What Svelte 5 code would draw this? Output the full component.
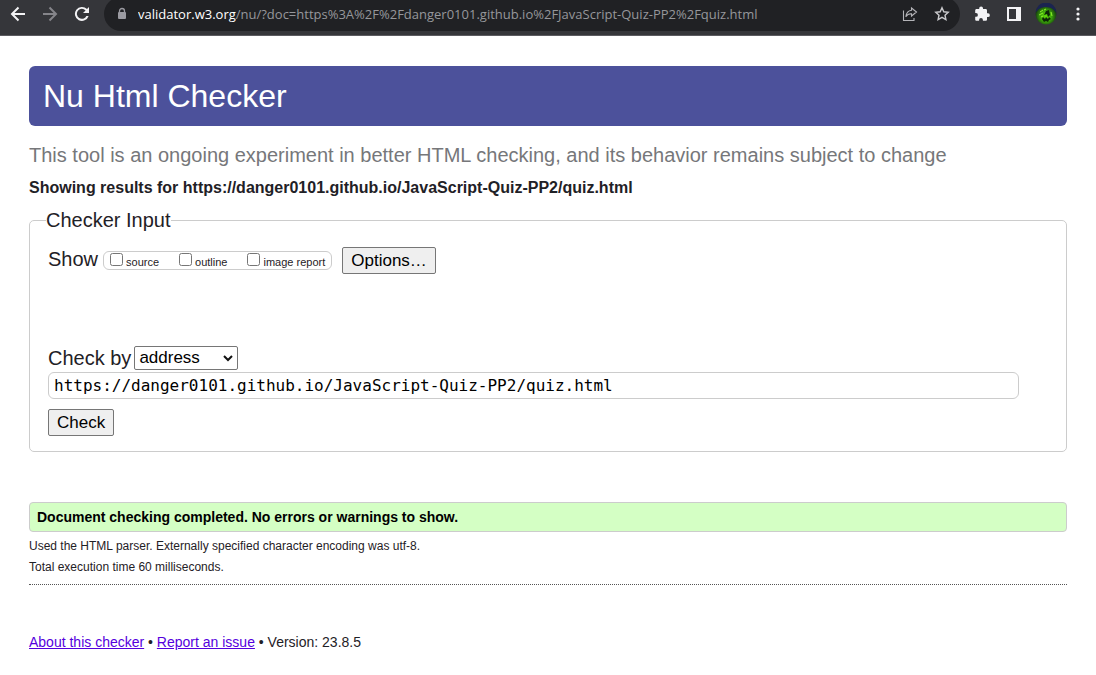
<script>
  const address = 'https://danger0101.github.io/JavaScript-Quiz-PP2/quiz.html';
  const reports = [
    { id: 'source', label: 'source' },
    { id: 'outline', label: 'outline' },
    { id: 'image', label: 'image report' }
  ];
</script>

<header class="toolbar">
  <button class="icon" aria-label="Back">
    <svg width="16" height="16" viewBox="0 0 16 16" fill="none" stroke="#f3f3f5" stroke-width="2"><path d="M15 8H2M8.500 1.500 2 8l6.500 6.500" /></svg>
  </button>
  <button class="icon" aria-label="Forward">
    <svg width="16" height="16" viewBox="0 0 16 16" fill="none" stroke="#85858a" stroke-width="2"><path d="M1 8h13M7.500 1.500 14 8l-6.500 6.500" /></svg>
  </button>
  <button class="icon" aria-label="Reload">
    <svg width="16" height="16" viewBox="0 0 16 16"><path d="M13 3.100A7 7 0 1 0 14.600 10h-2.200A5 5 0 1 1 11.600 4.500L9 7h6V1z" fill="#f3f3f5" /></svg>
  </button>
  <div class="omnibox">
    <svg class="lock" width="10" height="14" viewBox="0 0 10 14"><rect x="1" y="5" width="8" height="7" rx="1" fill="#9a9aa1" /><path d="M2.500 5.500V4a2.500 2.500 0 0 1 5 0v1.500" fill="none" stroke="#9a9aa1" stroke-width="1.300" /></svg>
    <span class="url"><b>validator.w3.org</b>/nu/?doc=https%3A%2F%2Fdanger0101.github.io%2FJavaScript-Quiz-PP2%2Fquiz.html</span>
    <button class="icon" aria-label="Share">
      <svg width="16" height="16" viewBox="0 0 16 16" fill="none" stroke="#b4b4b8" stroke-width="1.100"><path d="M1.500 4.500v10h10.500v-2.500M9.500 2l5 4-5 4V7.800C6.500 7.600 5 8.800 3.800 10.800 4.300 7.200 6.200 4.700 9.500 4.300z" /></svg>
    </button>
    <button class="icon" aria-label="Bookmark this page">
      <svg width="16" height="16" viewBox="0 0 16 16" fill="none" stroke="#c9c9cc" stroke-width="1.400"><path d="m8 1.800 1.800 4 4.400.5-3.200 2.900.9 4.400L8 11.400l-3.900 2.200.9-4.400-3.200-2.900 4.400-.5z" /></svg>
    </button>
  </div>
  <div class="actions">
    <button class="icon" aria-label="Extensions">
      <svg width="16" height="16" viewBox="0 0 16 16"><path d="M14 7.300h-1V4.500c0-.8-.6-1.400-1.300-1.400H9V2.300a1.900 1.900 0 0 0-3.800 0v.8H2.600c-.8 0-1.400.6-1.400 1.400V7h.8a1.900 1.900 0 0 1 0 3.800h-.8v2.600c0 .8.600 1.400 1.400 1.400h2.500V14a1.900 1.900 0 0 1 3.800 0v.8h2.800c.7 0 1.300-.6 1.300-1.400V11h1a1.850 1.850 0 0 0 0-3.700z" fill="#f3f3f5" /></svg>
    </button>
    <button class="icon" aria-label="Side panel">
      <svg width="16" height="16" viewBox="0 0 16 16"><path fill-rule="evenodd" d="M1 1h14v14H1zM3 3v10h7V3z" fill="#f3f3f5" /></svg>
    </button>
    <button class="icon" aria-label="Profile">
      <svg width="22" height="22" viewBox="0 0 22 22">
        <defs>
          <radialGradient id="face" cx="0.5" cy="0.6" r="0.5"><stop offset="0" stop-color="#62dc08" /><stop offset=".55" stop-color="#3aa00a" /><stop offset="1" stop-color="#173e12" /></radialGradient>
        </defs>
        <circle cx="11" cy="11" r="10.500" fill="url(#face)" />
        <path d="M.5 10A10.500 10.500 0 0 1 21.500 10C20 7 16 4 11 4S3 6 .5 10z" fill="#1b2450" />
        <path d="M11 8l3-1 1 5-2 2-1-3-3 1zM7 16l1-2 2 2 1-2 2 2 1-2 2 2-2 1-1 2-2-1-2 1z" fill="#0c2608" />
        <path d="M5 9l3-2M9 7l2-1M4 12l4-2M16 9l1 4M6 14l2-1" stroke="#8df32a" />
      </svg>
    </button>
    <button class="icon" aria-label="Menu">
      <svg width="16" height="16" viewBox="0 0 16 16" fill="#f3f3f5"><circle cx="8" cy="3" r="1.600" /><circle cx="8" cy="8" r="1.600" /><circle cx="8" cy="13" r="1.600" /></svg>
    </button>
  </div>
</header>

<main>
  <h1>Nu Html Checker</h1>
  <p class="tagline">This tool is an ongoing experiment in better HTML checking, and its behavior remains subject to change</p>
  <h2>Showing results for {address}</h2>

  <form onsubmit={(e) => e.preventDefault()}>
    <fieldset class="checker">
      <legend>Checker Input</legend>
      <div class="show">
        <span class="caption">Show</span>
        <div class="reports" role="group" aria-label="Show">
          {#each reports as r (r.id)}
            <label><input type="checkbox" name={r.id} /><span>{r.label}</span></label>
          {/each}
        </div>
        <button type="button" class="btn">Options…</button>
      </div>
      <div class="by">
        <label for="method">Check by</label>
        <div class="select">
          <select id="method">
            <option>address</option>
            <option>file upload</option>
            <option>text input</option>
          </select>
          <svg width="10" height="8" viewBox="0 0 10 8" fill="none" stroke="#111" stroke-width="2"><path d="m1 2 4 4 4-4" /></svg>
        </div>
      </div>
      <input class="doc" type="text" aria-label="Address" value={address} />
      <button type="submit" class="btn">Check</button>
    </fieldset>
  </form>

  <p class="success">Document checking completed. No errors or warnings to show.</p>
  <div class="details">
    <p>Used the HTML parser. Externally specified character encoding was utf-8.</p>
    <p>Total execution time 60 milliseconds.</p>
  </div>
  <footer><a href="#about">About this checker</a> • <a href="#issue">Report an issue</a> • Version: 23.8.5</footer>
</main>

<style>
  :global(body) {
    margin: 0;
    background: #fff;
    color: #1f2126;
    font-family: 'Liberation Sans', Arial, sans-serif;
  }
  .toolbar {
    display: flex;
    box-sizing: border-box;
    height: 36px;
    padding-left: 10px;
    overflow: hidden;
    background: #35363a;
    border-bottom: 1px solid #5b5b60;
  }
  .icon {
    display: flex;
    align-items: center;
    justify-content: center;
    flex: none;
    width: 32px;
    height: 28px;
    padding: 0;
    border: 0;
    background: none;
  }
  .toolbar > .icon {
    padding-right: 16px;
    justify-content: flex-start;
  }
  .omnibox {
    display: flex;
    flex: 1;
    align-items: center;
    box-sizing: border-box;
    min-width: 0;
    height: 34px;
    margin: -3px 0 0 -2px;
    padding: 0 2px 0 13px;
    border-radius: 17px;
    background: #202124;
  }
  .lock {
    flex: none;
    margin-right: 11px;
  }
  .url {
    flex: 1;
    min-width: 0;
    overflow: hidden;
    white-space: nowrap;
    color: #96979b;
    font: 13px/20px 'Open Sans', sans-serif;
  }
  .url b {
    color: #fff;
    font-weight: 400;
  }
  .actions {
    display: flex;
    padding: 0 2px 0 6px;
  }
  main {
    padding: 30px 29px;
  }
  h1,
  h2,
  p {
    margin: 0;
  }
  h1 {
    padding: 10px 14px;
    border-radius: 6px;
    background: #4c519b;
    color: #fff;
    font-size: 32px;
    font-weight: 400;
    line-height: 40px;
  }
  .tagline {
    margin-top: 17px;
    color: #76777a;
    font-size: 20px;
    line-height: 24px;
  }
  h2 {
    margin-top: 11px;
    font-size: 16px;
    line-height: 20px;
  }
  .checker {
    margin: 10px 0 0;
    padding: 15px 47px 15px 18px;
    border: 1px solid #ccc;
    border-radius: 5px;
  }
  legend {
    margin-left: -2px;
    padding: 0;
    font-size: 20px;
    line-height: 24px;
  }
  .show,
  .by {
    display: flex;
    align-items: center;
    font-size: 20px;
    line-height: 24px;
  }
  .caption {
    align-self: flex-start;
  }
  .reports {
    display: flex;
    gap: 20px;
    box-sizing: border-box;
    height: 19px;
    margin: 0 10px 0 5px;
    padding: 0 6px;
    border: 1px solid #ccc;
    border-radius: 6px;
    font-size: 11px;
    line-height: 20px;
  }
  .reports label {
    display: flex;
    gap: 3px;
  }
  .reports input {
    width: 13px;
    height: 13px;
    margin: 1px 0 0;
  }
  .btn {
    display: block;
    box-sizing: border-box;
    height: 27px;
    padding: 0 8px;
    border: 1px solid #767676;
    border-radius: 2px;
    background: #efefef;
    color: #000;
    font: 17px/24px 'Liberation Sans', Arial, sans-serif;
  }
  .by {
    gap: 3px;
    margin-top: 72px;
  }
  .select {
    display: grid;
    align-items: center;
  }
  .select > * {
    grid-area: 1 / 1;
  }
  .select svg {
    justify-self: end;
    margin-right: 5px;
    pointer-events: none;
  }
  select {
    appearance: none;
    width: 104px;
    height: 24px;
    padding: 0 4px;
    border: 1px solid #767676;
    border-radius: 2px;
    background: #fff;
    color: #000;
    font: 17px/20px 'Liberation Sans', Arial, sans-serif;
  }
  .doc {
    display: block;
    box-sizing: border-box;
    width: 100%;
    height: 27px;
    margin: 2px 0 10px;
    padding: 0 5px;
    border: 1px solid #ccc;
    border-radius: 6px;
    color: #000;
    font: 16px/24px 'DejaVu Sans Mono', monospace;
  }
  .success {
    margin-top: 50px;
    padding: 4px 7px;
    border: 1px solid #ccc;
    border-radius: 4px;
    background: #d4ffc4;
    color: #000;
    font-size: 14px;
    font-weight: 700;
    line-height: 20px;
  }
  .details {
    padding: 4px 0 6px;
    border-bottom: 1px dotted #555;
    font-size: 12px;
    line-height: 21px;
  }
  footer {
    margin-top: 47px;
    font-size: 14px;
    line-height: 20px;
  }
  a {
    color: #5500dd;
  }
</style>
